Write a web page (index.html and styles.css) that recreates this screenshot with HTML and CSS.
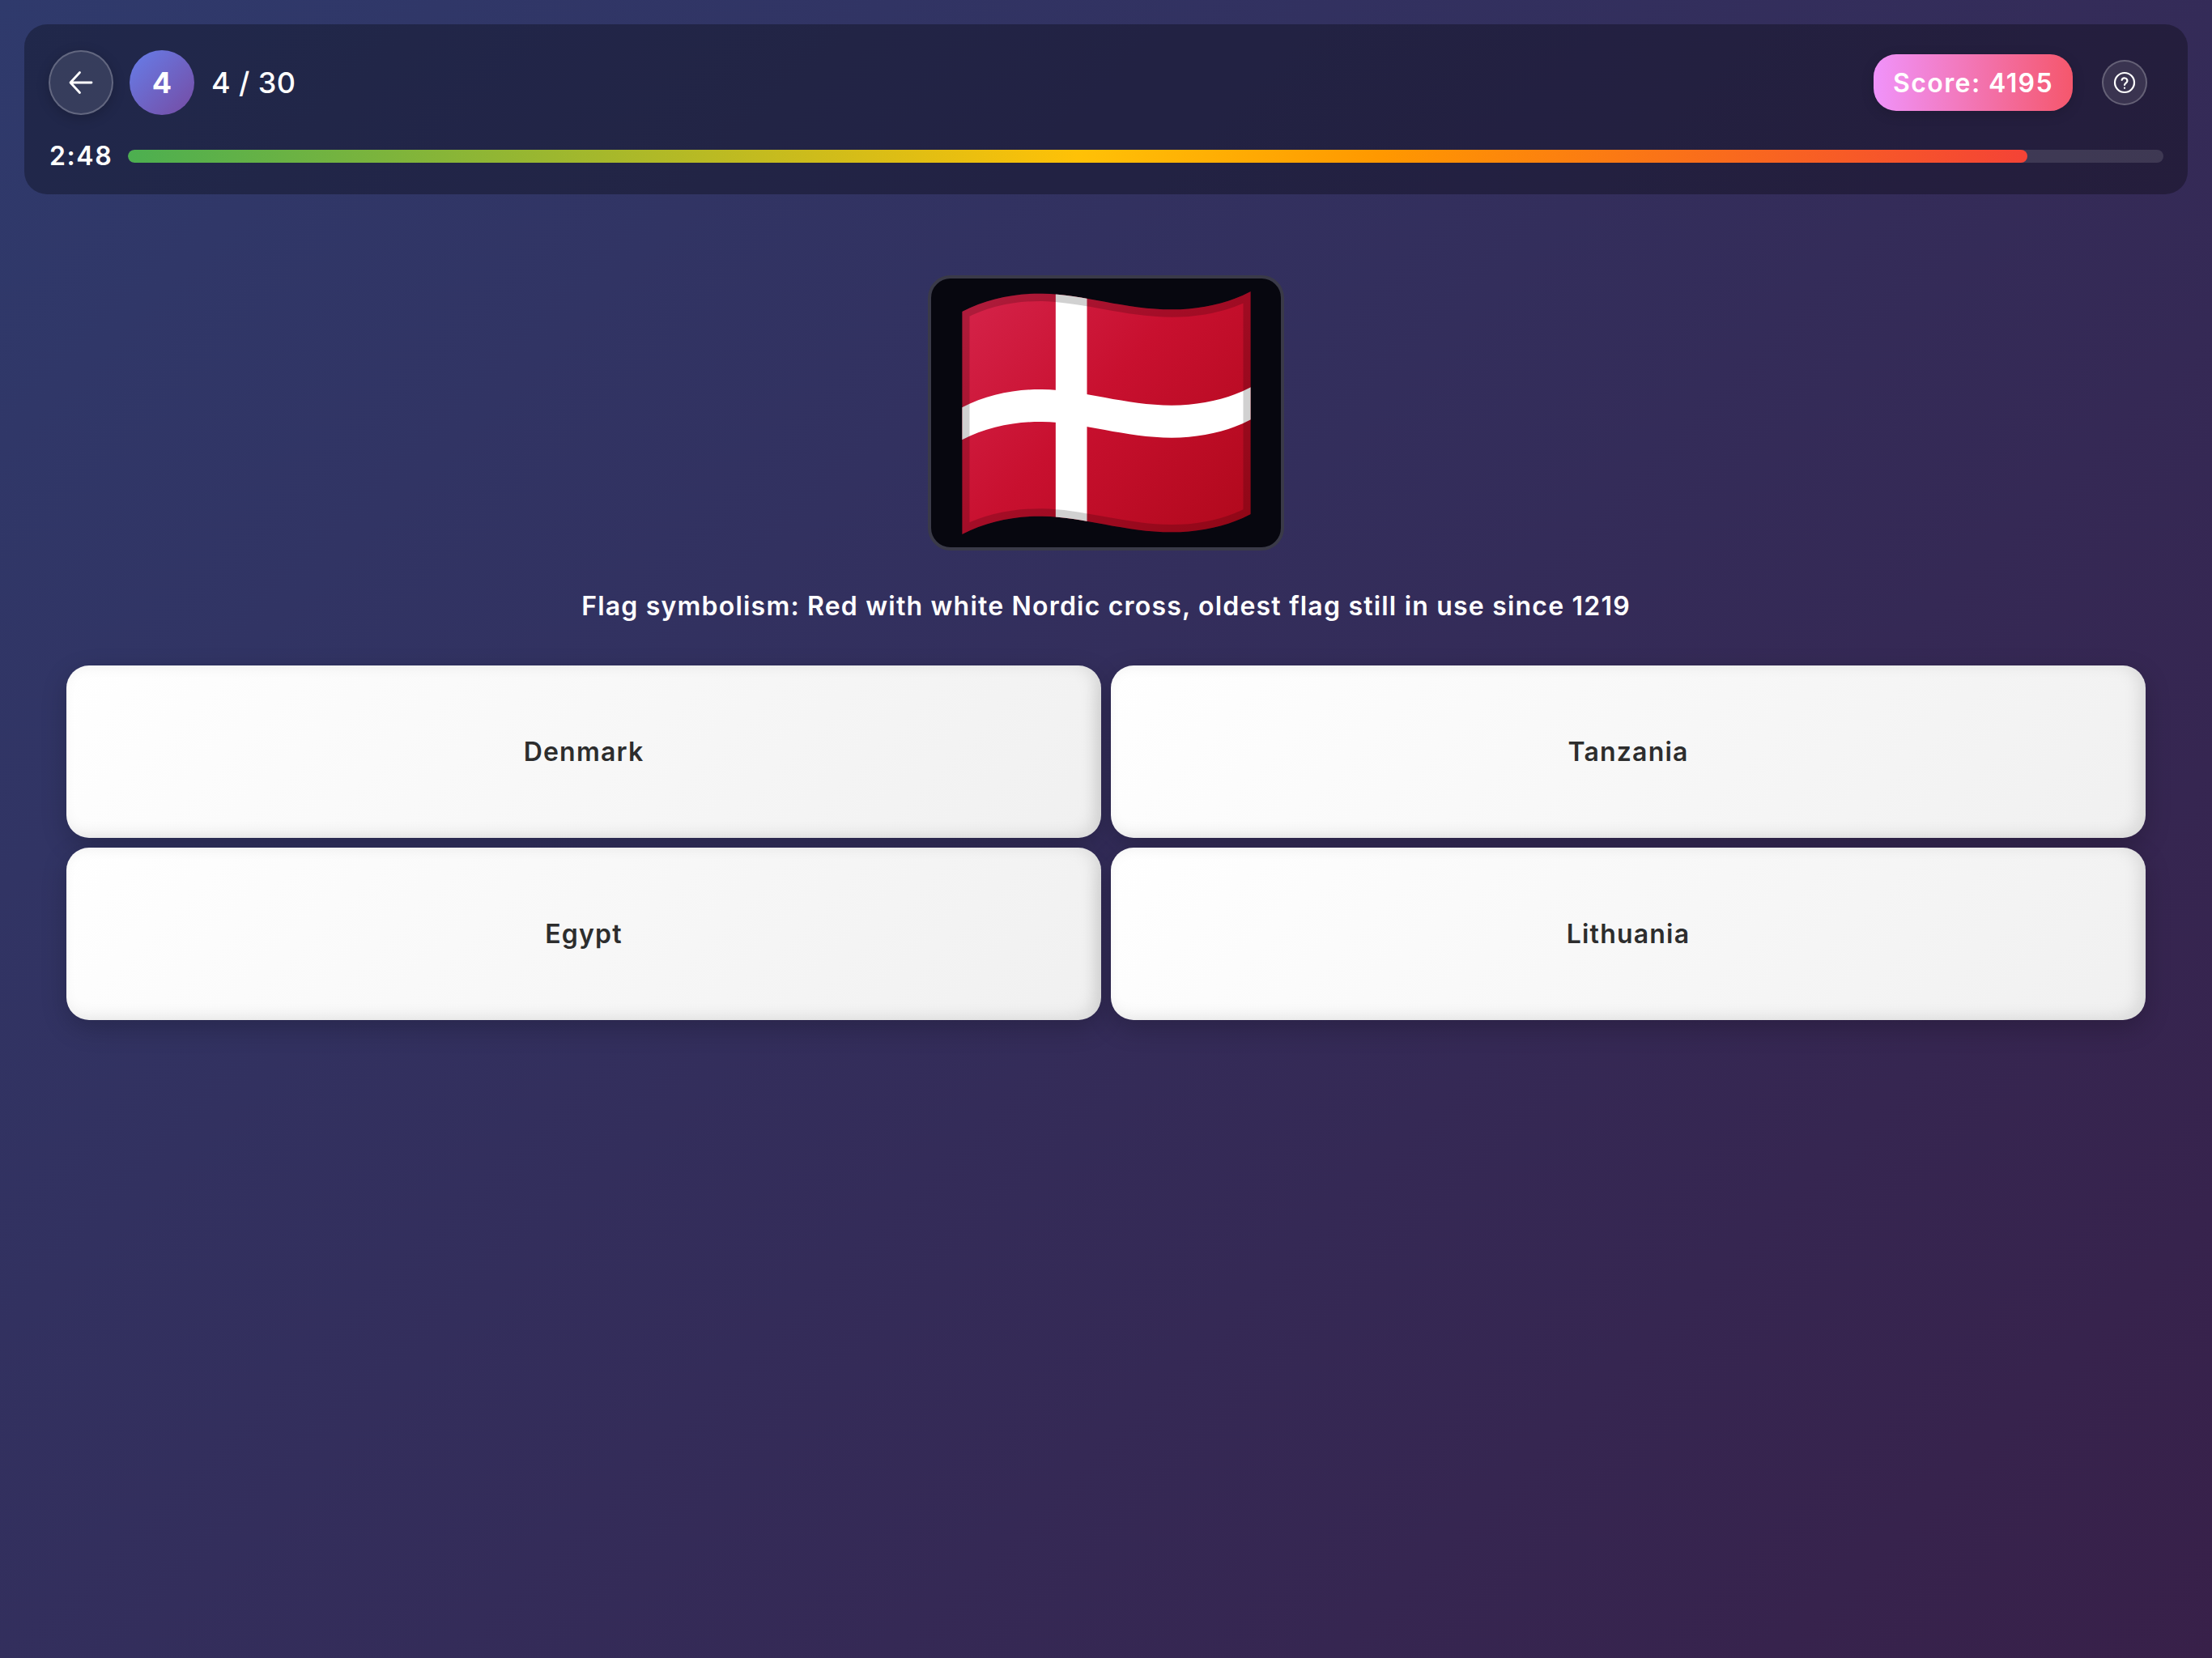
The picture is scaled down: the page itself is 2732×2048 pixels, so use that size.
FILE: index.html
```html
<!DOCTYPE html>
<html lang="en">
<head>
    <meta charset="UTF-8">
    <meta name="viewport" content="width=device-width, initial-scale=1.0">
    <title>Flag Quiz</title>
    <link rel="stylesheet" href="styles.css">
</head>
<body>
    <header class="top-bar">
        <div class="top-row">
            <button class="round-btn back-btn" aria-label="Back">
                <svg width="32" height="32" viewBox="0 0 32 32" fill="none" stroke="currentColor" stroke-width="2.8" stroke-linecap="round" stroke-linejoin="round">
                    <path d="M14.5 3.5 3 16l11.5 12.500M3.500 16H29"/>
                </svg>
            </button>
            <div class="level-badge">4</div>
            <div class="level-count">4 / 30</div>
            <div class="score-pill">Score: 4195</div>
            <button class="round-btn help-btn" aria-label="Help">
                <svg width="28" height="28" viewBox="0 0 28 28" fill="none" stroke="currentColor" stroke-width="2.200" stroke-linecap="round" stroke-linejoin="round">
                    <circle cx="14" cy="14" r="12"/>
                    <path d="M10.600 10.800a3.500 3.500 0 0 1 6.800 1.100c0 2.300-3.400 3-3.400 5"/>
                    <path d="M14 20.700v.1"/>
                </svg>
            </button>
        </div>
        <div class="timer-row">
            <span class="timer">2:48</span>
            <div class="track">
                <div class="fill" style="width: 93.33%"></div>
            </div>
        </div>
    </header>

    <main class="quiz">
        <div class="flag-card">
            <svg class="flag" width="357" height="300" viewBox="173 105 1070 900">
                <defs>
                    <linearGradient id="flagRed" gradientUnits="userSpaceOnUse" x1="230" y1="130" x2="1190" y2="980">
                        <stop offset="0" stop-color="#d42248"/>
                        <stop offset="0.45" stop-color="#c8102f"/>
                        <stop offset="1" stop-color="#b2091d"/>
                    </linearGradient>
                    <clipPath id="flagShape">
                        <path d="M173 180C265 132 370 112 470 113C620 115 780 172 950 172C1060 172 1160 148 1243 105V930C1160 973 1060 997 950 997C780 997 620 940 470 938C370 937 265 957 173 1005Z"/>
                    </clipPath>
                </defs>
                <g clip-path="url(#flagShape)">
                    <rect x="173" y="105" width="1070" height="900" fill="url(#flagRed)"/>
                    <path fill="#fff" d="M173 535C265 487 370 467 470 468C620 470 780 527 950 527C1060 527 1160 503 1243 460V580C1160 623 1060 647 950 647C780 647 620 590 470 588C370 587 265 607 173 655Z"/>
                    <rect x="520" y="105" width="116" height="900" fill="#fff"/>
                    <path fill="none" stroke="#000" stroke-opacity="0.18" stroke-width="56" d="M173 180C265 132 370 112 470 113C620 115 780 172 950 172C1060 172 1160 148 1243 105V930C1160 973 1060 997 950 997C780 997 620 940 470 938C370 937 265 957 173 1005Z"/>
                </g>
            </svg>
        </div>

        <p class="question">Flag symbolism: Red with white Nordic cross, oldest flag still in use since 1219</p>

        <div class="answers">
            <button class="answer">Denmark</button>
            <button class="answer">Tanzania</button>
            <button class="answer">Egypt</button>
            <button class="answer">Lithuania</button>
        </div>
    </main>
</body>
</html>
```

FILE: styles.css
```css
* {
    box-sizing: border-box;
    margin: 0;
    padding: 0;
}
body {
    font-family: 'Inter', 'Liberation Sans', sans-serif;
    background: linear-gradient(135deg, #2f3a6c, #382049);
    min-height: 100vh;
    padding: 30px;
    color: #fff;
}
button {
    font-family: inherit;
    border: none;
    cursor: pointer;
}
.top-bar {
    background: rgba(0, 0, 0, 0.3);
    border-radius: 28px;
    padding: 32px 30px 0;
    height: 210px;
}
.top-row {
    display: flex;
    align-items: center;
    height: 80px;
}
.round-btn {
    display: flex;
    align-items: center;
    justify-content: center;
    border-radius: 50%;
    color: #fff;
    background: rgba(255, 255, 255, 0.1);
    border: 2px solid rgba(255, 255, 255, 0.22);
}
.back-btn {
    width: 80px;
    height: 80px;
    box-shadow: 0 4px 16px rgba(0, 0, 0, 0.2);
}
.level-badge {
    width: 80px;
    height: 80px;
    margin-left: 20px;
    border-radius: 50%;
    background: linear-gradient(135deg, #667eea, #764ba2);
    display: flex;
    align-items: center;
    justify-content: center;
    font-size: 36px;
    font-weight: 700;
}
.level-count {
    margin-left: 21px;
    font-size: 36px;
    font-weight: 500;
    letter-spacing: 0.4px;
}
.score-pill {
    margin-left: auto;
    height: 70px;
    padding: 0 24px;
    display: flex;
    align-items: center;
    border-radius: 28px;
    background: linear-gradient(90deg, #f093fb, #f5576c);
    font-size: 32px;
    font-weight: 600;
    letter-spacing: 1.4px;
    box-shadow: 0 4px 16px rgba(0, 0, 0, 0.15);
}
.help-btn {
    width: 56px;
    height: 56px;
    margin-left: 36px;
    margin-right: 20px;
}
.timer-row {
    display: flex;
    align-items: center;
    margin-top: 39px;
    gap: 20px;
}
.timer {
    font-size: 32px;
    font-weight: 600;
    letter-spacing: 1.6px;
    line-height: 24px;
    width: 77px;
    margin-left: 1px;
    white-space: nowrap;
}
.track {
    flex: 1;
    height: 16px;
    border-radius: 8px;
    background: rgba(255, 255, 255, 0.12);
    overflow: hidden;
}
.fill {
    height: 100%;
    border-radius: 8px;
    background: linear-gradient(90deg, #4caf50, #ffc107 50%, #ff9800 66%, #f44336);
}
.quiz {
    display: flex;
    flex-direction: column;
    align-items: center;
    padding: 100px 52px 0;
}
.flag-card {
    width: 440px;
    height: 340px;
    border-radius: 28px;
    border: 4px solid #3a3a48;
    background: #07070f;
    display: flex;
    align-items: center;
    justify-content: center;
}
.question {
    margin-top: 49px;
    font-size: 32px;
    line-height: 40px;
    font-weight: 600;
    letter-spacing: 1.2px;
    text-align: center;
}
.answers {
    width: 100%;
    margin-top: 53px;
    display: grid;
    grid-template-columns: 1fr 1fr;
    gap: 12px;
}
.answer {
    height: 213px;
    border-radius: 28px;
    background: linear-gradient(135deg, #ffffff, #f0f0f0);
    color: #2d2d2d;
    font-size: 32px;
    font-weight: 600;
    letter-spacing: 1.2px;
    box-shadow: 0 10px 32px rgba(0, 0, 0, 0.2), inset -8px -3px 20px rgba(0, 0, 0, 0.1);
}
```
